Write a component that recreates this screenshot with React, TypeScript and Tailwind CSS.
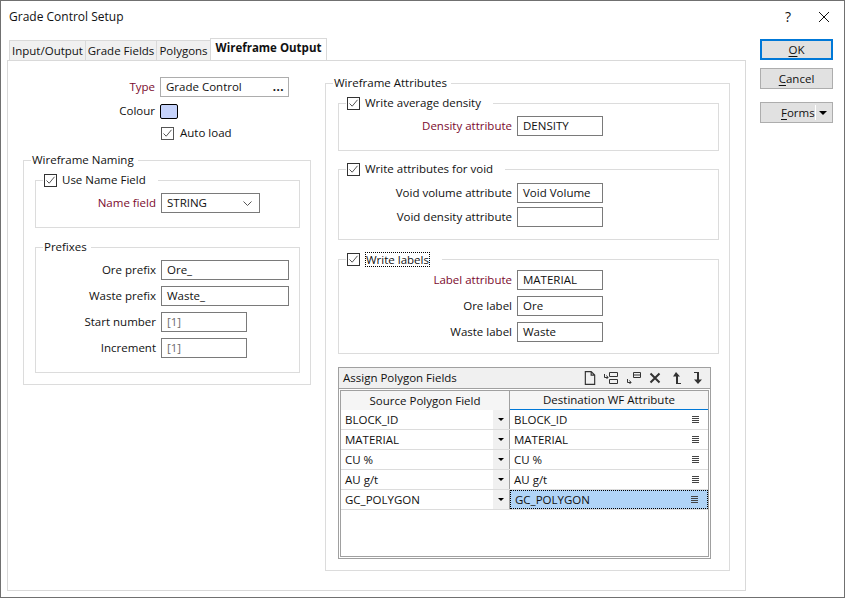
import type { ReactNode } from 'react';

const maroon = 'text-[#7b0a2e]';

function Check({ className = '' }: { className?: string }) {
  return (
    <span className={`flex h-[13px] w-[13px] shrink-0 items-center justify-center border border-[#333] bg-white ${className}`}>
      <svg width="11" height="11" viewBox="0 0 11 11" fill="none" stroke="#555" strokeWidth="1">
        <path d="M1.5 5.5 L4.2 8.2 L9.5 1.8" />
      </svg>
    </span>
  );
}

function TextBox({ value, width, muted }: { value: string; width: string; muted?: boolean }) {
  return (
    <div className={`flex h-5 items-center border border-[#7a7a7a] bg-white pl-[5px] ${width} ${muted ? 'text-[#6d6d6d]' : ''}`}>
      {value}
    </div>
  );
}

function Row({ label, labelW, red, gap = 'gap-[5px]', children }: { label: string; labelW: string; red?: boolean; gap?: string; children: ReactNode }) {
  return (
    <div className={`flex items-center ${gap}`}>
      <div className={`text-right ${labelW} ${red ? maroon : ''}`}>{label}</div>
      {children}
    </div>
  );
}

function Group({ title, className, children }: { title: ReactNode; className: string; children: ReactNode }) {
  return (
    <div className={`relative border border-[#dcdcdc] ${className}`}>
      <div className="absolute -top-[9px] left-[7px] flex h-4 items-center bg-white px-[1px] pr-1">{title}</div>
      {children}
    </div>
  );
}

function CheckTitle({ label, focus }: { label: string; focus?: boolean }) {
  return (
    <span className="flex items-center gap-[5px] pr-2">
      <Check />
      <span className={focus ? 'border border-dotted border-black leading-[13px]' : ''}>{label}</span>
    </span>
  );
}

function Tab({ label, active, width }: { label: string; active?: boolean; width: string }) {
  return (
    <div
      className={
        active
          ? `relative z-10 -ml-px flex h-[22px] items-center justify-center border border-b-0 border-[#d9d9d9] bg-white pb-1 font-bold ${width}`
          : `-ml-px flex h-[20px] items-center justify-center border border-b-0 border-[#d9d9d9] bg-[#f0f0f0] ${width}`
      }
    >
      {label}
    </div>
  );
}

function WinButton({ children, primary, className = '' }: { children: ReactNode; primary?: boolean; className?: string }) {
  return (
    <div className={`flex h-[21px] w-[73px] items-center justify-center bg-[#e1e1e1] ${primary ? 'border-2 border-[#0078d7]' : 'border border-[#adadad]'} ${className}`}>
      {children}
    </div>
  );
}

const pathIcons = {
  doc: <path d="M1.5 .5 H6.5 L9.5 3.5 V11.5 H1.5 Z M6.5 .5 V3.5 H9.5" fill="none" stroke="#333" />,
};

function ToolIcons() {
  return (
    <div className="flex items-center gap-[7px] pr-[5px]">
      <svg width="16" height="14" viewBox="0 0 11 12" className="-mr-[2px]">{pathIcons.doc}</svg>
      <svg width="16" height="14" viewBox="0 0 16 14" fill="none" stroke="#333">
        <path d="M6.5 1.5 H14.5 V5.5 H6.5 Z M6.5 8.5 H14.5 V12.5 H6.5 Z M1.5 3 V6.5 H5 M3.5 4.5 L5 6.5 L3.5 8" />
      </svg>
      <svg width="16" height="14" viewBox="0 0 16 14" fill="none" stroke="#333">
        <path d="M7.5 1.5 H14.5 V6.5 H7.5 Z M7.5 4 H14.5 M1.5 8 V11.5 H5 M3.5 9.5 L5 11.5 L3.5 13" />
      </svg>
      <svg width="12" height="12" viewBox="0 0 12 12" stroke="#333" strokeWidth="2" fill="none">
        <path d="M1.5 1.5 L10.5 10.5 M10.5 1.5 L1.5 10.5" />
      </svg>
      <svg width="14" height="12" viewBox="0 0 14 12" fill="#333" className="ml-[2px]">
        <path d="M6 0 L10 4.5 H8 V11 H11 V12 H6 V4.5 H3 Z" />
      </svg>
      <svg width="14" height="12" viewBox="0 0 14 12" fill="#333">
        <path d="M3 0 H8 V7.5 H11 L7 12 L3 7.5 H6 V1 H3 Z" />
      </svg>
    </div>
  );
}

const gridRows = ['BLOCK_ID', 'MATERIAL', 'CU %', 'AU g/t', 'GC_POLYGON'];

function PolygonGrid() {
  return (
    <div className="mt-[13px] ml-3 h-[192px] w-[373px] border border-[#a0a0a0]">
      <div className="flex h-[21px] items-center justify-between border-b border-[#a0a0a0] bg-[#f0f0f0] pl-1">
        <span>Assign Polygon Fields</span>
        <ToolIcons />
      </div>
      <div className="m-px h-[167px] border border-[#a0a0a0] bg-white">
        <div className="flex h-[19px]">
          <div className="flex w-[169px] items-center justify-center border-r border-[#a0a0a0] bg-[#f5f5f5]">Source Polygon Field</div>
          <div className="flex flex-1 items-center justify-center border-b-[1px] border-[#0078d7] bg-[#f5f5f5] pb-px">Destination WF Attribute</div>
        </div>
        {gridRows.map((name, i) => (
          <div key={name} className="flex h-5 border-b border-[#dcdcdc]">
            <div className="flex w-[169px] items-center justify-between">
              <span className="pl-1">{name}</span>
              <span className="flex h-[19px] w-[17px] items-center justify-center border-r border-[#a0a0a0] bg-[#f0f0f0]">
                <span className="h-0 w-0 border-x-[3px] border-t-[3px] border-x-transparent border-t-black" />
              </span>
            </div>
            <div className={`flex flex-1 items-center justify-between pr-[9px] pl-[4px] ${i === 4 ? 'border border-dotted border-black bg-[#b0d4f7]' : ''}`}>
              <span>{name}</span>
              <svg width="7" height="7" viewBox="0 0 7 7" stroke="#444"><path d="M0 .5 H7 M0 2.5 H7 M0 4.5 H7 M0 6.5 H7" /></svg>
            </div>
          </div>
        ))}
      </div>
    </div>
  );
}

export default function App() {
  return (
    <div className="h-[598px] w-[845px] overflow-hidden border border-[#707070] bg-white font-['Open_Sans',sans-serif] text-[11.5px] leading-4 text-[#111]">
      <div className="flex h-[31px] items-center justify-between pl-2">
        <span className="text-[12px]">Grade Control Setup</span>
        <div className="flex items-center gap-[27px] pr-[14px]">
          <span className="text-[14px]">?</span>
          <svg width="12" height="12" viewBox="0 0 12 12" stroke="#111" fill="none"><path d="M1 1 L11 11 M11 1 L1 11" /></svg>
        </div>
      </div>

      <div className="flex pl-[6px]">
        <div className="w-[739px]">
          <div className="flex h-[28px] items-end pl-[3px]">
            <Tab label="Input/Output" width="w-[77px]" />
            <Tab label="Grade Fields" width="w-[72px]" />
            <Tab label="Polygons" width="w-[55px]" />
            <Tab label="Wireframe Output" active width="w-[117px]" />
          </div>
          <div className="flex h-[531px] border border-[#d9d9d9]">
            <div className="w-[317px] pt-[16px] pl-[15px]">
              <Row label="Type" labelW="w-[132px]" red>
                <div className="flex h-5 w-[129px] items-center justify-between border border-[#adadad] pr-1 pl-[5px]">
                  <span>Grade Control</span>
                  <span className="font-bold tracking-[0.5px]">...</span>
                </div>
              </Row>
              <div className="mt-[6px]">
                <Row label="Colour" labelW="w-[132px]">
                  <div className="h-[15px] w-[18px] rounded-[2px] border border-black bg-[#c6d3fb]" />
                </Row>
              </div>
              <div className="mt-[6px] ml-[138px] flex items-center gap-[6px]">
                <Check className="border-[#555]" />
                <span>Auto load</span>
              </div>

              <Group title="Wireframe Naming" className="mt-[19px] h-[225px] w-[288px] pt-[19px] pl-[11px]">
                <Group title={<CheckTitle label="Use Name Field" />} className="h-[48px] w-[265px] pt-3">
                  <Row label="Name field" labelW="w-[120px]" red>
                    <div className="flex h-5 w-[99px] items-center justify-between border border-[#7a7a7a] pr-[7px] pl-[5px]">
                      <span>STRING</span>
                      <svg width="9" height="5" viewBox="0 0 9 5" fill="none" stroke="#555"><path d="M.5 .5 L4.5 4.5 L8.5 .5" /></svg>
                    </div>
                  </Row>
                </Group>
                <Group title="Prefixes" className="mt-[19px] h-[126px] w-[265px] pt-3">
                  <div className="flex flex-col gap-[6px]">
                    <Row label="Ore prefix" labelW="w-[120px]"><TextBox value="Ore_" width="w-[128px]" /></Row>
                    <Row label="Waste prefix" labelW="w-[120px]"><TextBox value="Waste_" width="w-[128px]" /></Row>
                    <Row label="Start number" labelW="w-[120px]"><TextBox value="[1]" width="w-[86px]" muted /></Row>
                    <Row label="Increment" labelW="w-[120px]"><TextBox value="[1]" width="w-[86px]" muted /></Row>
                  </div>
                </Group>
              </Group>
            </div>

            <div className="pt-[22px]">
              <Group title="Wireframe Attributes" className="h-[488px] w-[405px] pt-[19px]">
                <Group title={<CheckTitle label="Write average density" />} className="ml-3 h-[48px] w-[381px] pt-3">
                  <Row label="Density attribute" labelW="w-[173px]" red><TextBox value="DENSITY" width="w-[86px]" /></Row>
                </Group>
                <Group title={<CheckTitle label="Write attributes for void" />} className="mt-[18px] ml-3 h-[71px] w-[381px] pt-[13px]">
                  <div className="flex flex-col gap-1">
                    <Row label="Void volume attribute" labelW="w-[173px]"><TextBox value="Void Volume" width="w-[86px]" /></Row>
                    <Row label="Void density attribute" labelW="w-[173px]"><TextBox value="" width="w-[86px]" /></Row>
                  </div>
                </Group>
                <Group title={<CheckTitle label="Write labels" focus />} className="mt-[19px] ml-3 h-[95px] w-[381px] pt-[10px]">
                  <div className="flex flex-col gap-[6px]">
                    <Row label="Label attribute" labelW="w-[173px]" red><TextBox value="MATERIAL" width="w-[86px]" /></Row>
                    <Row label="Ore label" labelW="w-[173px]"><TextBox value="Ore" width="w-[86px]" /></Row>
                    <Row label="Waste label" labelW="w-[173px]"><TextBox value="Waste" width="w-[86px]" /></Row>
                  </div>
                </Group>
                <PolygonGrid />
              </Group>
            </div>
          </div>
        </div>

        <div className="ml-[14px] flex flex-col pt-[7px]">
          <WinButton primary><span className="underline decoration-1 underline-offset-2">O</span>K</WinButton>
          <WinButton className="mt-[8px]"><span><span className="underline underline-offset-2">C</span>ancel</span></WinButton>
          <WinButton className="relative mt-[13px] justify-start pl-[20px]">
            <span><span className="underline underline-offset-2">F</span>orms</span>
            <span className="absolute top-[2px] right-[16px] h-[15px] w-px bg-white" />
            <span className="absolute top-2 right-[5px] h-0 w-0 border-x-[4px] border-t-[4px] border-x-transparent border-t-black" />
          </WinButton>
        </div>
      </div>
    </div>
  );
}
